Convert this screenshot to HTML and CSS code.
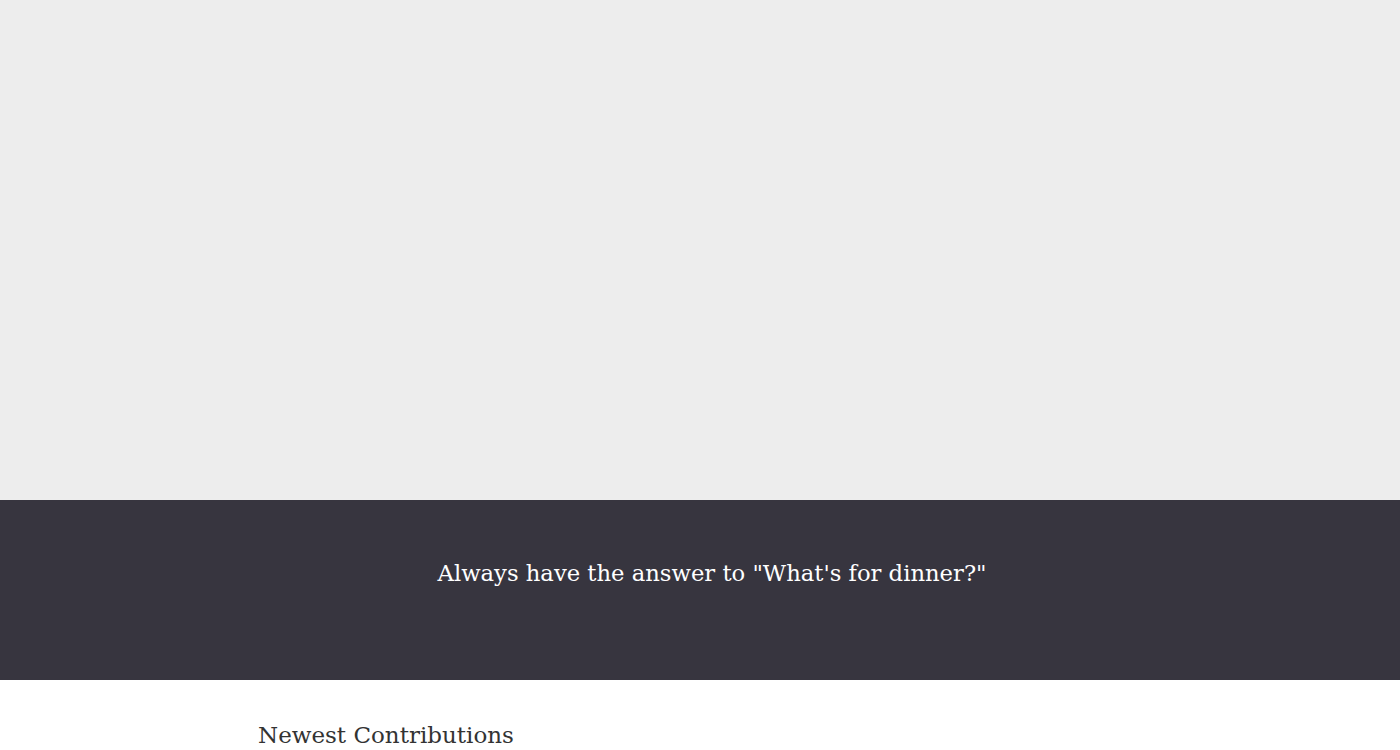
FILE: index.html
```html
<!DOCTYPE html>
<html>
<head>
<meta charset="utf-8">
<link rel="stylesheet" href="styles.css">
</head>
<body>
<div class="hero"></div>
<section class="band">
  <p class="tagline">Always have the answer to "What's for dinner?"</p>
</section>
<main class="container">
  <h2 class="section-title">Newest Contributions</h2>
</main>
</body>
</html>
```
FILE: styles.css
```css
html, body {
  margin: 0;
  padding: 0;
  background: #ffffff;
  font-family: "DejaVu Serif", "Liberation Serif", serif;
}
.hero {
  height: 500px;
  background: #ededed;
}
.band {
  height: 180px;
  background: #37353f;
  display: flex;
  justify-content: center;
  box-sizing: border-box;
  padding-top: 58px;
  padding-left: 24px;
}
.tagline {
  margin: 0;
  color: #ffffff;
  font-size: 22.7px;
  line-height: 30px;
}
.container {
  width: 884px;
  margin: 0 auto;
  padding-top: 40px;
}
.section-title {
  margin: 0;
  font-weight: normal;
  color: #333333;
  font-size: 23px;
  line-height: 30px;
}
```
